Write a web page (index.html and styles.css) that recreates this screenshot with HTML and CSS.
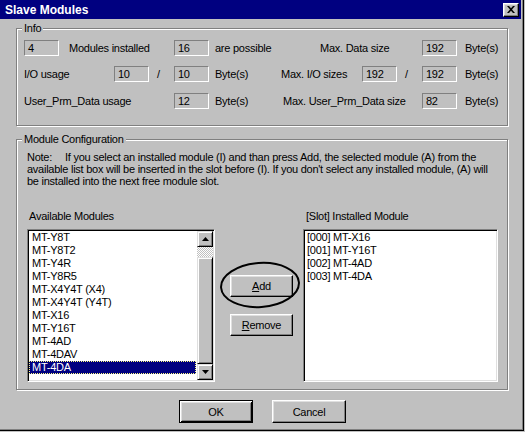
FILE: index.html
```html
<!DOCTYPE html>
<html>
<head>
<meta charset="utf-8">
<link rel="stylesheet" href="styles.css">
</head>
<body>
<div class="dialog">
  <div class="titlebar">
    <span class="title">Slave Modules</span>
    <span class="close"><svg width="8" height="7" viewBox="0 0 8 7"><path d="M0 0h2l2 2.2L6 0h2L5 3.5 8 7H6L4 4.8 2 7H0l3-3.5z"/></svg></span>
  </div>
  <div class="content">
    <div class="group info">
      <span class="legend">Info</span>
      <div class="row r1">
        <span class="field">4</span>
        <span class="lbl w-mi">Modules installed</span>
        <span class="field">16</span>
        <span class="lbl w-ap">are possible</span>
        <span class="lbl w-mds">Max. Data size</span>
        <span class="field">192</span>
        <span class="lbl bytes-r">Byte(s)</span>
      </div>
      <div class="row r2">
        <span class="lbl w-io">I/O usage</span>
        <span class="field">10</span>
        <span class="lbl slash">/</span>
        <span class="field">10</span>
        <span class="lbl w-b1">Byte(s)</span>
        <span class="lbl w-mio">Max. I/O sizes</span>
        <span class="field">192</span>
        <span class="lbl slash">/</span>
        <span class="field">192</span>
        <span class="lbl bytes-r">Byte(s)</span>
      </div>
      <div class="row r3">
        <span class="lbl w-up">User_Prm_Data usage</span>
        <span class="field">12</span>
        <span class="lbl w-b2">Byte(s)</span>
        <span class="lbl w-mup">Max. User_Prm_Data size</span>
        <span class="field">82</span>
        <span class="lbl bytes-r">Byte(s)</span>
      </div>
    </div>

    <div class="group config">
      <span class="legend">Module Configuration</span>
      <p class="note"><span class="note-key">Note:</span>If you select an installed module (I) and than press Add, the selected module (A) from the<br>available list box will be inserted in the slot before (I). If you don't select any installed module, (A) will<br>be installed into the next free module slot.</p>
      <div class="lists">
        <div class="col col-left">
          <div class="col-label">Available Modules</div>
          <div class="listbox avail">
            <div class="items">
              <div class="item">MT-Y8T</div>
              <div class="item">MT-Y8T2</div>
              <div class="item">MT-Y4R</div>
              <div class="item">MT-Y8R5</div>
              <div class="item">MT-X4Y4T (X4)</div>
              <div class="item">MT-X4Y4T (Y4T)</div>
              <div class="item">MT-X16</div>
              <div class="item">MT-Y16T</div>
              <div class="item">MT-4AD</div>
              <div class="item">MT-4DAV</div>
              <div class="item selected">MT-4DA</div>
            </div>
            <div class="scrollbar">
              <span class="sb-btn"><svg width="7" height="4" viewBox="0 0 7 4"><path d="M3.5 0 7 4H0z"/></svg></span>
              <div class="sb-track">
                <div class="dither"></div>
                <div class="thumb"></div>
              </div>
              <span class="sb-btn"><svg width="7" height="4" viewBox="0 0 7 4"><path d="M0 0h7L3.5 4z"/></svg></span>
            </div>
          </div>
        </div>
        <div class="col col-mid">
          <button class="btn small"><u>A</u>dd</button>
          <button class="btn small remove"><u>R</u>emove</button>
          <svg class="circle" width="84" height="50" viewBox="0 0 84 50"><ellipse cx="42" cy="25" rx="39" ry="22" transform="rotate(-4 42 25)" fill="none" stroke="#000" stroke-width="2"/></svg>
        </div>
        <div class="col col-right">
          <div class="col-label r">[Slot] Installed Module</div>
          <div class="listbox inst">
            <div class="item">[000] MT-X16</div>
            <div class="item">[001] MT-Y16T</div>
            <div class="item">[002] MT-4AD</div>
            <div class="item">[003] MT-4DA</div>
          </div>
        </div>
      </div>
    </div>

    <div class="footer">
      <button class="btn big default">OK</button>
      <button class="btn big">Cancel</button>
    </div>
  </div>
</div>
</body>
</html>
```

FILE: styles.css
```css
* { box-sizing: border-box; }
html, body { margin: 0; padding: 0; }
body {
  width: 525px;
  height: 432px;
  overflow: hidden;
  background: #c0c0c0;
  font-family: "Liberation Sans", Arial, sans-serif;
  font-size: 11px;
  letter-spacing: -0.25px;
  color: #000;
}
.dialog {
  width: 524px;
  height: 431px;
  background: #c0c0c0;
  border-right: 1px solid #000;
  border-bottom: 1px solid #000;
  box-shadow: inset -1px -1px 0 #808080;
  padding-right: 2px;
}
.titlebar {
  height: 19px;
  background: #000080;
  display: flex;
  align-items: center;
  justify-content: space-between;
  padding: 0 2px 0 5px;
}
.title {
  color: #fff;
  font-weight: bold;
  font-size: 12px;
  letter-spacing: 0;
}
.close {
  width: 16px;
  height: 14px;
  display: flex;
  align-items: center;
  justify-content: center;
  background: #c0c0c0;
  border: 1px solid;
  border-color: #fff #000 #000 #fff;
  box-shadow: inset -1px -1px 0 #808080, inset 1px 1px 0 #dfdfdf;
}
.content { padding: 9px 0 0 16px; }

.group {
  position: relative;
  width: 492px;
  border: 1px solid #808080;
  box-shadow: inset 1px 1px 0 #fff, 1px 1px 0 #fff;
}
.legend {
  position: absolute;
  top: -7px;
  left: 5px;
  padding: 0 2px;
  background: #c0c0c0;
  line-height: 13px;
}
.info { height: 98px; padding: 11px 0 0 7px; }
.row { display: flex; align-items: center; height: 16px; }
.r2 { margin-top: 10px; }
.r3 { margin-top: 11px; }
.field {
  width: 35px;
  height: 16px;
  flex: none;
  border: 1px solid;
  border-color: #808080 #fff #fff #808080;
  padding-left: 3px;
  line-height: 14px;
}
.lbl { line-height: 16px; white-space: nowrap; flex: none; }
.w-mi { width: 105px; margin-left: 10px; }
.w-ap { width: 105px; margin-left: 6px; }
.w-mds { width: 102px; }
.bytes-r { margin-left: 8px; }
.w-io { width: 90px; }
.slash { width: 25px; padding-left: 8px; }
.w-b1 { width: 66px; margin-left: 6px; }
.w-mio { width: 81px; }
.w-up { width: 150px; }
.w-b2 { width: 68px; margin-left: 6px; }
.w-mup { width: 139px; }

.config { height: 251px; margin-top: 13px; padding: 11px 0 0 10px; }
.note { margin: 0; line-height: 12px; white-space: nowrap; }
.note-key { display: inline-block; width: 38px; }
.lists { display: flex; margin-top: 23px; }
.col-label { line-height: 13px; height: 13px; margin-bottom: 6px; padding-left: 2px; }
.col-label.r { padding-left: 3px; }
.col-left { width: 188px; }
.col-right { width: 195px; }
.col-mid {
  width: 88px;
  position: relative;
  display: flex;
  flex-direction: column;
  align-items: flex-start;
  padding: 65px 0 0 15px;
}
.circle { position: absolute; left: 3px; top: 50px; }

.listbox {
  height: 153px;
  background: #fff;
  border: 1px solid;
  border-color: #808080 #fff #fff #808080;
  box-shadow: inset 1px 1px 0 #000, inset -1px -1px 0 #dfdfdf;
  padding: 1px;
}
.avail { display: flex; }
.items { flex: 1; }
.item { height: 13px; line-height: 13px; padding-left: 3px; white-space: nowrap; }
.item.selected {
  background: #000080;
  color: #fff;
  outline: 1px dotted #ffff80;
  outline-offset: -1px;
  margin-right: 1px;
}
.inst .item { padding-left: 2px; }
.scrollbar { width: 16px; display: flex; flex-direction: column; }
.sb-btn {
  height: 16px;
  flex: none;
  display: flex;
  align-items: center;
  justify-content: center;
  background: #c0c0c0;
  border: 1px solid;
  border-color: #dfdfdf #000 #000 #dfdfdf;
  box-shadow: inset 1px 1px 0 #fff, inset -1px -1px 0 #808080;
}
.sb-track { flex: 1; display: flex; flex-direction: column; }
.dither {
  height: 10px;
  background: repeating-conic-gradient(#fff 0 25%, #c0c0c0 0 50%) 0 0 / 2px 2px;
}
.thumb {
  flex: 1;
  background: #c0c0c0;
  border: 1px solid;
  border-color: #dfdfdf #000 #000 #dfdfdf;
  box-shadow: inset 1px 1px 0 #fff, inset -1px -1px 0 #808080;
}

.btn {
  font-family: inherit;
  font-size: 11px;
  letter-spacing: -0.25px;
  color: #000;
  padding: 0;
  margin: 0;
  background: #c0c0c0;
  border: 1px solid;
  border-color: #fff #000 #000 #fff;
  box-shadow: inset -1px -1px 0 #808080, inset 1px 1px 0 #dfdfdf;
}
.btn.small { width: 63px; height: 22px; }
.btn.remove { margin-top: 17px; }
.btn.big { width: 74px; height: 23px; }
.btn.default {
  border: 1px solid #000;
  box-shadow: inset 1px 1px 0 #fff, inset -1px -1px 0 #000, inset 2px 2px 0 #dfdfdf, inset -2px -2px 0 #808080;
}
.footer { display: flex; gap: 19px; margin-top: 10px; padding-left: 163px; }
```
